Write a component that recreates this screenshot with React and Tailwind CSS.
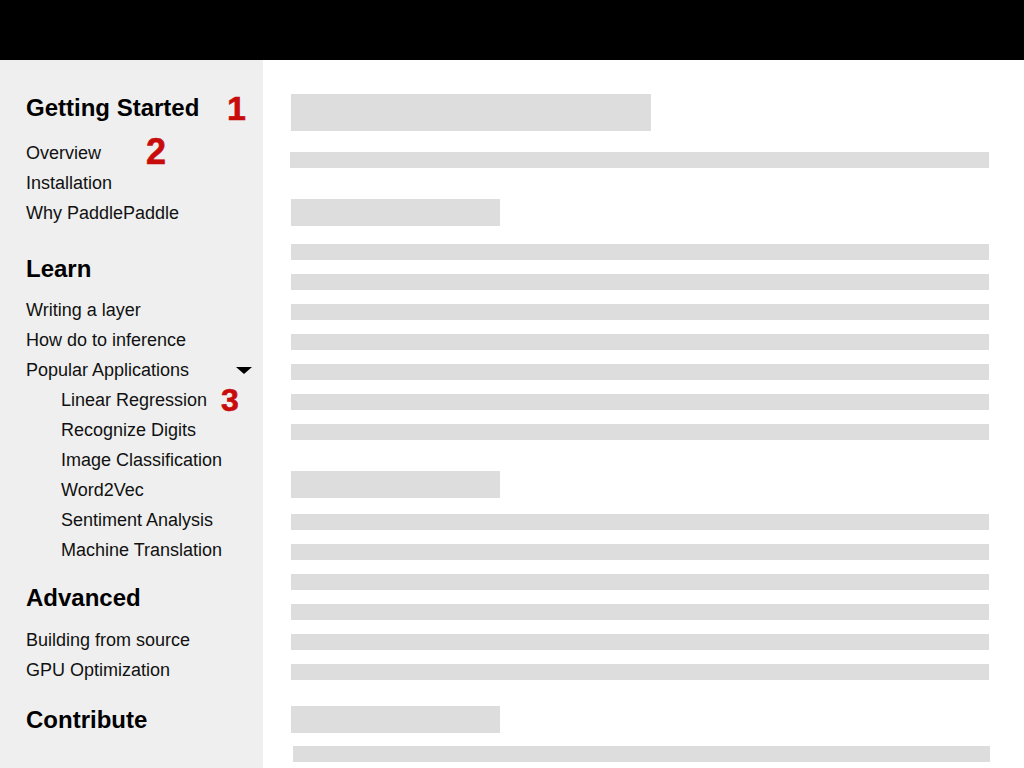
import React from 'react';

const Heading = ({ children, className = '' }) => (
  <div className={`text-[24px] leading-[30px] font-bold text-black ${className}`}>{children}</div>
);

const Item = ({ children, sub = false }) => (
  <div className={`text-[18px] leading-[30px] text-[#111] ${sub ? 'pl-[35px]' : ''}`}>{children}</div>
);

const Marker = ({ n, className }) => (
  <span className={`absolute font-bold text-[#c80c0c] leading-none [-webkit-text-stroke:0.6px_#c80c0c] ${className}`}>{n}</span>
);

const Bar = ({ className = '' }) => <div className={`h-[16px] bg-[#dddddd] ${className}`} />;

const App = () => {
  return (
    <div className="w-[1024px] h-[768px] overflow-hidden flex flex-col" style={{ fontFamily: '"Liberation Sans", Arial, sans-serif' }}>
      <div className="h-[60px] bg-black shrink-0" />
      <div className="flex flex-1 min-h-0">
        <aside className="w-[263px] shrink-0 bg-[#efefef] pl-[26px] pt-[33px] relative">
          <div className="relative">
            <Heading>Getting Started</Heading>
            <Marker n="1" className="left-[201px] top-[-2px] text-[34px]" />
          </div>
          <div className="mt-[15px] relative">
            <Item>Overview</Item>
            <Marker n="2" className="left-[120px] top-[-4px] text-[36px]" />
            <Item>Installation</Item>
            <Item>Why PaddlePaddle</Item>
          </div>

          <Heading className="mt-[26px]">Learn</Heading>
          <div className="mt-[11px]">
            <Item>Writing a layer</Item>
            <Item>How do to inference</Item>
            <div className="relative">
              <Item>Popular Applications</Item>
              <svg className="absolute left-[210px] top-[12px]" width="16" height="7" viewBox="0 0 16 7">
                <polygon points="0,0 16,0 8,7" fill="#000" />
              </svg>
            </div>
            <div className="relative">
              <Item sub>Linear Regression</Item>
              <Marker n="3" className="left-[195px] top-[-1px] text-[32px]" />
            </div>
            <Item sub>Recognize Digits</Item>
            <Item sub>Image Classification</Item>
            <Item sub>Word2Vec</Item>
            <Item sub>Sentiment Analysis</Item>
            <Item sub>Machine Translation</Item>
          </div>

          <Heading className="mt-[18px]">Advanced</Heading>
          <div className="mt-[12px]">
            <Item>Building from source</Item>
            <Item>GPU Optimization</Item>
          </div>

          <Heading className="mt-[20px]">Contribute</Heading>
        </aside>

        <main className="flex-1 bg-white pl-[28px] pr-[35px] pt-[34px]">
          <div className="w-[360px] h-[37px] bg-[#dddddd]" />
          <Bar className="mt-[21px] -ml-px" />

          <div className="mt-[31px] w-[209px] h-[27px] bg-[#dddddd]" />
          <div className="mt-[18px] flex flex-col gap-[14px]">
            <Bar />
            <Bar />
            <Bar />
            <Bar />
            <Bar />
            <Bar />
            <Bar />
          </div>

          <div className="mt-[31px] w-[209px] h-[27px] bg-[#dddddd]" />
          <div className="mt-[16px] flex flex-col gap-[14px]">
            <Bar />
            <Bar />
            <Bar />
            <Bar />
            <Bar />
            <Bar />
          </div>

          <div className="mt-[26px] w-[209px] h-[27px] bg-[#dddddd]" />
          <Bar className="mt-[13px] ml-[2px] -mr-px" />
        </main>
      </div>
    </div>
  );
};

export default App;
